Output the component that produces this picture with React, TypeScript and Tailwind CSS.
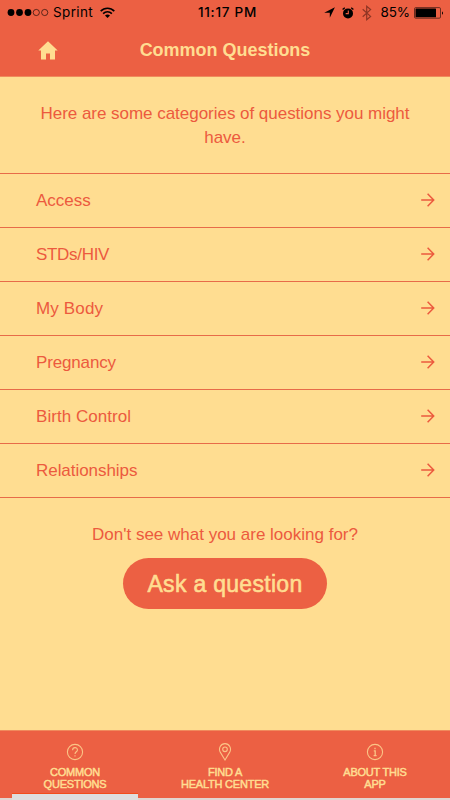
import type { ReactNode } from "react";

const categories = [
  { label: "Access", tracking: "tracking-[0px]" },
  { label: "STDs/HIV", tracking: "tracking-[-0.3px]" },
  { label: "My Body", tracking: "tracking-[0.15px]" },
  { label: "Pregnancy", tracking: "tracking-[-0.15px]" },
  { label: "Birth Control", tracking: "tracking-[0.05px]" },
  { label: "Relationships", tracking: "tracking-[-0.05px]" },
];

function StatusBar() {
  return (
    <div className="grid h-[25px] grid-cols-[1fr_auto_1fr] items-center pl-[7px] pr-[6px] font-['Inter',sans-serif] text-[13.5px] text-black">
      <div className="flex items-center">
        <svg width="42" height="9" viewBox="0 0 42 9">
          <circle cx="4" cy="4.5" r="3.4" />
          <circle cx="12.5" cy="4.5" r="3.4" />
          <circle cx="21" cy="4.5" r="3.4" />
          <circle cx="29.3" cy="4.5" r="3.1" fill="none" stroke="black" strokeWidth="0.6" />
          <circle cx="37.7" cy="4.5" r="3.1" fill="none" stroke="black" strokeWidth="0.6" />
        </svg>
        <span className="ml-1 tracking-[0.35px]">Sprint</span>
        <svg className="ml-[7px]" width="15" height="12" viewBox="0 0 15 12" fill="none" stroke="black">
          <path d="M0.7 4.1C4.5 0.2 10.5 0.2 14.3 4.1" strokeWidth="1.6" />
          <path d="M3.1 6.6C5.6 4.1 9.4 4.1 11.9 6.6" strokeWidth="1.6" />
          <path d="M5 8.4C6.4 7.1 8.6 7.1 10 8.4L7.5 11Z" fill="black" stroke="none" />
        </svg>
      </div>
      <span className="pl-1 text-[13.5px] font-medium tracking-[0.75px]">11:17 PM</span>
      <div className="flex items-center justify-end">
        <svg width="11" height="11" viewBox="0 0 11 11">
          <path d="M10.9 0.2L5.8 10.7V5.8H0.2Z" />
        </svg>
        <svg className="ml-[7px]" width="12" height="12" viewBox="0 0 12 12">
          <circle cx="6" cy="6.4" r="5" />
          <path d="M0.6 2.6L2.8 0.7M11.4 2.6L9.2 0.7" stroke="black" strokeWidth="1.3" />
          <path d="M6.3 3.6V6.6H3.7" fill="none" stroke="#ec6043" strokeWidth="1.1" />
        </svg>
        <svg className="ml-[8px]" width="10" height="16" viewBox="0 0 10 16">
          <path d="M0.7 4.3L8.6 11.4L4.7 14.7V1.3L8.6 4.6L0.7 11.7" fill="none" stroke="#8d3524" strokeWidth="1.2" />
        </svg>
        <span className="ml-[8px] text-[13.5px] tracking-[-0.1px]">85%</span>
        <svg className="ml-[4px]" width="30" height="12" viewBox="0 0 30 12">
          <rect x="0.5" y="0.6" width="26" height="10.6" rx="1.2" fill="none" stroke="#4b2017" strokeWidth="0.8" />
          <rect x="1.5" y="1.5" width="20.5" height="8.8" rx="0.4" />
          <path d="M28 4.2Q30 6 28 7.8Z" />
        </svg>
      </div>
    </div>
  );
}

function ArrowIcon() {
  return (
    <svg className="mb-px" width="14" height="14" viewBox="0 0 14 14" fill="none" stroke="#ec5a3e" strokeWidth="1.5">
      <path d="M0.2 7H12.5M6.6 0.8L12.7 7L6.6 13.2" />
    </svg>
  );
}

function TabItem({ icon, lines }: { icon: ReactNode; lines: [string, string] }) {
  return (
    <button className="flex flex-1 flex-col items-center pt-[12px] text-[11px] leading-[12px] tracking-[-0.22px] text-[#ffdd91] [-webkit-text-stroke:0.5px_#ffdd91]">
      {icon}
      <span className="mt-[5px]">{lines[0]}</span>
      <span>{lines[1]}</span>
    </button>
  );
}

const iconProps = {
  width: 18,
  height: 18,
  viewBox: "0 0 18 18",
  fill: "none",
  stroke: "#fbc486",
  strokeWidth: 1.1,
};

export default function App() {
  return (
    <div className="flex h-[800px] w-[450px] flex-col overflow-hidden bg-[#ffdd91] font-['Liberation_Sans',Arial,sans-serif] text-[17px] text-[#ec5a3e]">
      <header className="h-[77px] shrink-0 border-b border-[#f08a5c] bg-[#ec6043]">
        <StatusBar />
        <div className="grid h-[50px] grid-cols-[1fr_auto_1fr] items-center text-[#ffdd91]">
          <svg className="ml-[38px]" width="20" height="19" viewBox="0 0 20 19" fill="currentColor">
            <path d="M10 0.3L0.3 9.5H3V18.5H8V12.5H12V18.5H17V9.5H19.7Z" />
          </svg>
          <h1 className="text-[18px] font-bold tracking-[-0.02px]">Common Questions</h1>
        </div>
      </header>

      <main className="flex flex-1 flex-col">
        <p className="flex h-24 flex-col items-center pt-[25px] leading-[24px]">
          <span className="whitespace-nowrap tracking-[-0.03px]">Here are some categories of questions you might</span>
          <span>have.</span>
        </p>

        <ul className="border-t border-[#e76b48]">
          {categories.map(({ label, tracking }) => (
            <li key={label} className="flex h-[54px] items-center justify-between border-b border-[#e76b48] pl-9 pr-[15px]">
              <span className={tracking}>{label}</span>
              <ArrowIcon />
            </li>
          ))}
        </ul>

        <div className="flex flex-col items-center pt-[25px]">
          <p className="leading-6">Don't see what you are looking for?</p>
          <button className="mt-[11px] h-[51px] w-[204px] rounded-full bg-[#ec6043] pt-px text-[23px] tracking-[0.3px] text-[#ffdd91] [-webkit-text-stroke:0.6px_#ffdd91]">
            Ask a question
          </button>
        </div>
      </main>

      <footer className="relative flex h-[70px] shrink-0 border-b-2 border-t border-b-[#e2d5d0] border-t-[#f08a5c] bg-[#ec6043]">
        <TabItem
          lines={["COMMON", "QUESTIONS"]}
          icon={
            <svg {...iconProps}>
              <circle cx="9" cy="9" r="7.6" />
              <path d="M6.6 7.2C6.6 3.8 11.4 3.9 11.4 6.9C11.4 8.8 9 8.7 9 11M9 12.3V13.6" />
            </svg>
          }
        />
        <TabItem
          lines={["FIND A", "HEALTH CENTER"]}
          icon={
            <svg {...iconProps}>
              <path d="M9 17L4.4 9.4C2 5.2 4.8 0.6 9 0.6S16 5.2 13.6 9.4Z" />
              <circle cx="9" cy="6.3" r="2.3" />
            </svg>
          }
        />
        <TabItem
          lines={["ABOUT THIS", "APP"]}
          icon={
            <svg {...iconProps}>
              <circle cx="9" cy="9" r="7.6" />
              <path d="M9 4.8V6.3M7.8 7.8H9.2V12.6M7.6 12.6H10.6" strokeWidth="1.3" />
            </svg>
          }
        />
        {/* Active tab marker */}
        <div className="absolute -bottom-0.5 left-3 h-[7px] w-[126px] border-t border-[#f34c1b] bg-[#dedede]" />
      </footer>
    </div>
  );
}
